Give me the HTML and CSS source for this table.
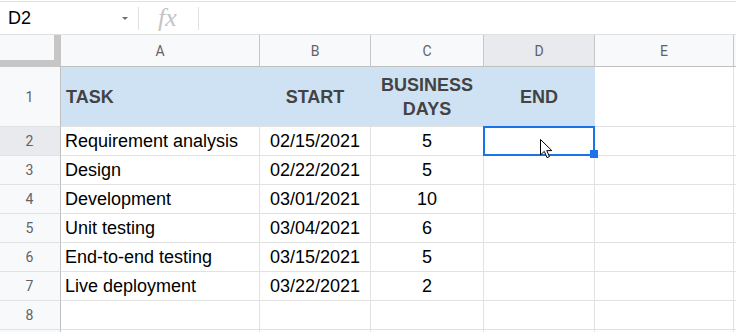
FILE: index.html
```html
<!DOCTYPE html>
<html>
<head>
<meta charset="utf-8">
<link rel="stylesheet" href="styles.css">
</head>
<body>
<div class="formula">
  <div class="namebox"><span class="name">D2</span><span class="caret"></span></div>
  <div class="sep"></div>
  <div class="fx">fx</div>
  <div class="sep"></div>
  <div class="input"></div>
</div>
<div class="sheet">
  <div class="corner"></div>
  <div class="ch">A</div>
  <div class="ch">B</div>
  <div class="ch">C</div>
  <div class="ch sel">D</div>
  <div class="ch">E</div>
  <div class="ch last"></div>

  <div class="rh">1</div>
  <div class="c blue hd left">TASK</div>
  <div class="c blue hd center">START</div>
  <div class="c blue hd center">BUSINESS<br>DAYS</div>
  <div class="c blue hd center">END</div>
  <div class="c"></div>
  <div class="c"></div>

  <div class="rh sel">2</div>
  <div class="c">Requirement analysis</div>
  <div class="c center">02/15/2021</div>
  <div class="c center">5</div>
  <div class="c active">
    <div class="selbox"></div>
    <div class="handle"></div>
    <svg class="cursor" width="13" height="20" viewBox="0 0 13 20"><path d="M0.5 0.5 L0.5 16 L4.3 12.4 L7 18.6 L9.4 17.6 L6.8 11.6 L11.8 11.6 Z" fill="#fff" stroke="#000" stroke-width="1" stroke-linejoin="miter"/></svg>
  </div>
  <div class="c"></div>
  <div class="c"></div>

  <div class="rh">3</div>
  <div class="c">Design</div>
  <div class="c center">02/22/2021</div>
  <div class="c center">5</div>
  <div class="c"></div>
  <div class="c"></div>
  <div class="c"></div>

  <div class="rh">4</div>
  <div class="c">Development</div>
  <div class="c center">03/01/2021</div>
  <div class="c center">10</div>
  <div class="c"></div>
  <div class="c"></div>
  <div class="c"></div>

  <div class="rh">5</div>
  <div class="c">Unit testing</div>
  <div class="c center">03/04/2021</div>
  <div class="c center">6</div>
  <div class="c"></div>
  <div class="c"></div>
  <div class="c"></div>

  <div class="rh">6</div>
  <div class="c">End-to-end testing</div>
  <div class="c center">03/15/2021</div>
  <div class="c center">5</div>
  <div class="c"></div>
  <div class="c"></div>
  <div class="c"></div>

  <div class="rh">7</div>
  <div class="c">Live deployment</div>
  <div class="c center">03/22/2021</div>
  <div class="c center">2</div>
  <div class="c"></div>
  <div class="c"></div>
  <div class="c"></div>

  <div class="rh">8</div>
  <div class="c"></div>
  <div class="c"></div>
  <div class="c"></div>
  <div class="c"></div>
  <div class="c"></div>
  <div class="c"></div>

  <div class="rh"></div>
  <div class="c"></div>
  <div class="c"></div>
  <div class="c"></div>
  <div class="c"></div>
  <div class="c"></div>
  <div class="c"></div>
</div>
</body>
</html>
```
FILE: styles.css
```css
* { box-sizing: border-box; }
html, body { margin: 0; padding: 0; background: #fff; }
body {
  width: 736px;
  height: 332px;
  overflow: hidden;
  font-family: "Liberation Sans", Arial, sans-serif;
}
.formula {
  margin-top: 1px;
  height: 34px;
  border-top: 1px solid #e0e0e0;
  border-bottom: 1px solid #e0e0e0;
  display: flex;
  align-items: center;
}
.namebox {
  width: 138px;
  height: 100%;
  display: flex;
  align-items: center;
  padding-left: 8px;
  font-size: 18px;
  color: #000;
}
.caret {
  margin-left: auto;
  margin-right: 10px;
  width: 0;
  height: 0;
  border-left: 3px solid transparent;
  border-right: 3px solid transparent;
  border-top: 3px solid #6f6f6f;
}
.sep {
  width: 1px;
  height: 23px;
  background: #e0e0e0;
}
.fx {
  width: 59px;
  text-align: center;
  font-family: "Liberation Serif", serif;
  font-style: italic;
  font-size: 26px;
  color: #c4c4c4;
  line-height: 24px;
  padding-right: 2px;
}
.input { flex: 1; }

.sheet {
  display: grid;
  grid-template-columns: 61px 199px 111px 113px 111px 139px 1fr;
  grid-template-rows: 32px 60px repeat(7, 29px) 10px;
}
.corner {
  background: #f8f9fa;
  border-right: 7px solid #c6c6c6;
  border-bottom: 7px solid #c6c6c6;
}
.ch {
  background: #f8f9fa;
  border-right: 1px solid #c7c7c7;
  border-bottom: 1px solid #c0c0c0;
  display: flex;
  align-items: center;
  justify-content: center;
  font-family: Roboto, "Liberation Sans", sans-serif;
  font-size: 14px;
  color: #5f6368;
}
.ch.sel { background: #e8eaed; }
.rh {
  background: #f8f9fa;
  border-right: 1px solid #c0c0c0;
  border-bottom: 1px solid #e2e2e2;
  display: flex;
  align-items: center;
  justify-content: center;
  font-family: Roboto, "Liberation Sans", sans-serif;
  font-size: 14px;
  color: #5f6368;
  padding-right: 1px;
}
.rh.sel { background: #e8eaed; }
.c {
  border-right: 1px solid #e2e2e2;
  border-bottom: 1px solid #e2e2e2;
  display: flex;
  align-items: center;
  padding: 0 4px;
  font-size: 18px;
  color: #000;
  white-space: nowrap;
  position: relative;
}
.center { justify-content: center; text-align: center; }
.blue {
  background: #cfe2f3;
  border-right-color: #cfe2f3;
}
.hd {
  font-weight: bold;
  font-size: 18px;
  line-height: 24px;
  color: #434343;
}
.left { padding-left: 5px; }
.active { z-index: 2; }
.selbox {
  position: absolute;
  left: -1px;
  top: -1px;
  width: 112px;
  height: 30px;
  border: 2px solid #1a73e8;
}
.handle {
  position: absolute;
  left: 106px;
  top: 23px;
  width: 8px;
  height: 8px;
  background: #1a73e8;
}
.cursor {
  position: absolute;
  left: 56px;
  top: 12px;
}
```
